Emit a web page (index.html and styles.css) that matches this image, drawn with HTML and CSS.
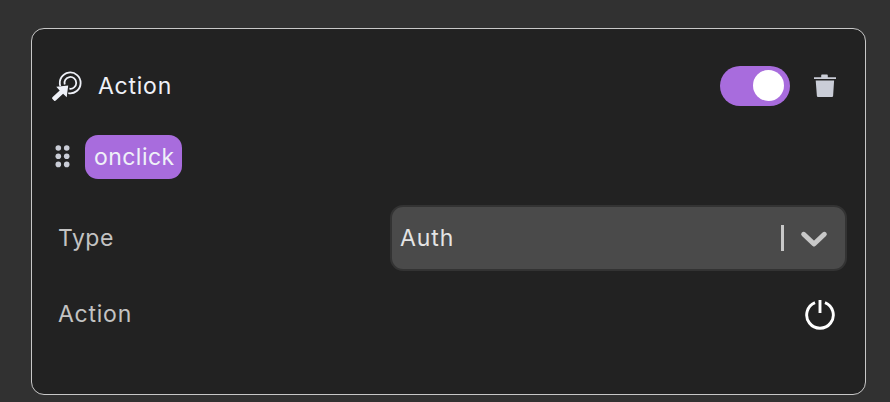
FILE: index.html
```html
<!DOCTYPE html>
<html lang="en">
<head>
<meta charset="utf-8">
<title>Action</title>
<link rel="stylesheet" href="styles.css">
</head>
<body>
<section class="card">
  <header class="header">
    <svg class="click-icon" width="32" height="32" viewBox="0 0 32 32">
      <g fill="none" stroke="#eff1f8" stroke-width="1.8">
        <path d="M8.3 16A10.4 10.4 0 1 1 16.3 23.1"/>
        <path d="M12.7 14.6A5.9 5.9 0 1 1 17.4 18.7"/>
      </g>
      <path fill="#eff1f8" d="M16.2 15.5 4.3 16.8 7.7 20.4.4 27.3Q-.2 28.3.5 29L2.2 30.7Q3 31.3 3.8 30.6L11.1 23.7 14.7 27.2Z"/>
    </svg>
    <h1 class="title"><span class="t-action">Action</span></h1>
    <button class="toggle" aria-label="Enabled"><span class="knob"></span></button>
    <svg class="trash" width="24" height="24" viewBox="0 0 24 24" fill="#cacdd7">
      <path d="M1 3.2H8.2V1.4Q8.2.5 9 .5H14Q14.8.5 14.8 1.4V3.2H23V5.1H1ZM2.7 6.6H21.1L20.1 22Q20 23 19 23H5Q4 23 3.9 22Z"/>
    </svg>
  </header>
  <div class="event">
    <svg width="16" height="24" viewBox="0 0 16 24" fill="#cacdd7">
      <circle cx="3.3" cy="3" r="2.8"/><circle cx="11.7" cy="3" r="2.8"/>
      <circle cx="3.3" cy="11.2" r="2.8"/><circle cx="11.7" cy="11.2" r="2.8"/>
      <circle cx="3.3" cy="19.4" r="2.8"/><circle cx="11.7" cy="19.4" r="2.8"/>
    </svg>
    <span class="tag"><span class="t-onclick">onclick</span></span>
  </div>
  <div class="field">
    <span class="label t-type">Type</span>
    <div class="select">
      <span class="value t-auth">Auth</span>
      <span class="divider"></span>
      <svg width="28" height="20" viewBox="0 0 28 20" fill="none" stroke="#c8c8c8" stroke-width="5" stroke-linecap="round" stroke-linejoin="round"><path d="M3.7 6.3 14 16 24.3 6.3"/></svg>
    </div>
  </div>
  <div class="field power-row">
    <span class="label t-action">Action</span>
    <svg width="30" height="30" viewBox="0 0 30 30" fill="none" stroke="#fff" stroke-width="2.9">
      <path d="M10 2.6A13.3 13.3 0 1 0 20 2.6M15 0V13"/>
    </svg>
  </div>
</section>
</body>
</html>
```
FILE: styles.css
```css
* { box-sizing: border-box; }

body {
  margin: 0;
  height: 402px;
  padding: 28px 24px 0 31px;
  background: #313131;
  color: #eff1f8;
  font: 380 23px/34px Inter, "Open Sans", sans-serif;
  overflow: hidden;
}

svg { display: block; flex: none; }

.card {
  height: 367px;
  padding: 37px 18px 0 20px;
  background: #222;
  border: 1px solid #c8c8c8;
  border-radius: 13px;
}

.header {
  display: flex;
  align-items: center;
  height: 40px;
  padding-right: 10px;
}

.title { margin: 0 auto 0 14px; font: inherit; }

.toggle {
  width: 70px;
  height: 40px;
  padding: 4px 6px;
  border: 0;
  border-radius: 20px;
  background: #a86cdd;
  display: flex;
  justify-content: flex-end;
}

.knob {
  width: 31px;
  height: 31px;
  border-radius: 50%;
  background: #fff;
}

.trash { margin-left: 23px; }

.event {
  display: flex;
  align-items: center;
  gap: 14px;
  height: 44px;
  margin-top: 29px;
  padding-left: 3px;
}

.tag {
  width: 97px;
  height: 44px;
  padding-left: 9px;
  border-radius: 13px;
  background: #a86cdd;
  line-height: 44px;
}

.field {
  display: flex;
  align-items: center;
  justify-content: space-between;
  margin-top: 26px;
  padding-left: 6px;
}

.label { color: #c3c3c3; }

.select {
  display: flex;
  align-items: center;
  width: 457px;
  height: 66px;
  padding: 0 17px 0 8px;
  border: 2px solid #333;
  border-radius: 13px;
  background: #4a4a4a;
}

.value { margin-right: auto; color: #e4e4e4; }

.divider {
  width: 3px;
  height: 26px;
  margin-right: 16px;
  background: #c8c8c8;
}

.power-row {
  height: 30px;
  margin-top: 29px;
  padding-right: 12px;
}

.power-row .label { margin-bottom: 2px; }

.t-action { letter-spacing: 0.75px; }
.t-onclick { letter-spacing: 0.45px; }
.t-type { letter-spacing: 0.5px; }
.t-auth { letter-spacing: 0.9px; }
```
